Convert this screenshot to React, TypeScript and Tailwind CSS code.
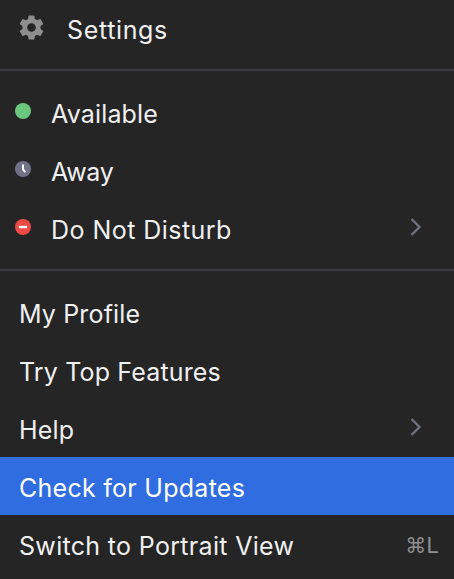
import React from "react";

function Chevron() {
  return (
    <svg width="12" height="20" viewBox="0 0 12 20" fill="none" stroke="#6f7080" strokeWidth="2.4" className="shrink-0">
      <path d="M1.5 2 L9.5 10 L1.5 18" />
    </svg>
  );
}

function Row({ label, icon, right, active, pad, shift, track }: { label: string; icon?: React.ReactNode; right?: React.ReactNode; active?: boolean; pad?: string; shift?: string; track?: string }) {
  return (
    <div className={`h-[58px] flex items-center ${active ? "bg-[#2f6de0]" : ""}`}>
      {icon}
      <span className={`text-[25px] leading-none ${track ?? "tracking-[0.15px]"} ${active ? "text-white" : "text-[#f0f0f0]"} ${pad ?? "ml-[19px]"} ${shift ?? "mt-1"}`}>{label}</span>
      {right && <div className="ml-auto flex items-center">{right}</div>}
    </div>
  );
}

function Gear() {
  return (
    <svg width="29" height="29" viewBox="0 0 24 24" className="ml-[16.5px] -mt-[4px] shrink-0" fill="#8e8e8e">
      <path fillRule="evenodd" d="M19.4 13c.04-.33.1-.66.1-1s-.06-.67-.1-1l2.1-1.65c.2-.15.25-.42.12-.65l-2-3.46a.5.5 0 0 0-.6-.22l-2.5 1a7.3 7.3 0 0 0-1.7-1l-.37-2.6A.5.5 0 0 0 13.95 2h-3.9a.5.5 0 0 0-.5.42l-.37 2.6c-.6.25-1.17.6-1.7 1l-2.5-1a.5.5 0 0 0-.6.22l-2 3.46c-.13.23-.07.5.12.65L4.6 11c-.04.33-.1.66-.1 1s.06.67.1 1l-2.1 1.65c-.2.15-.25.42-.12.65l2 3.46c.12.22.38.3.6.22l2.5-1c.53.4 1.1.75 1.7 1l.37 2.6c.04.24.25.42.5.42h3.9c.25 0 .46-.18.5-.42l.37-2.6c.6-.25 1.17-.6 1.7-1l2.5 1c.22.08.48 0 .6-.22l2-3.46a.5.5 0 0 0-.12-.65L19.4 13ZM12 15.6a3.6 3.6 0 1 1 0-7.2 3.6 3.6 0 0 1 0 7.2Z" />
    </svg>
  );
}

function Dot({ kind }: { kind: "green" | "away" | "dnd" }) {
  return (
    <svg width="16" height="16" viewBox="0 0 16 16" className="ml-[15px] -mt-[6px] shrink-0">
      <circle cx="8" cy="8" r="8" fill={kind === "green" ? "#6bc77d" : kind === "away" ? "#71718a" : "#ec4a45"} />
      {kind === "away" && <path d="M8 3.5 V8.5 L10.2 11.2" stroke="#fff" strokeWidth="2" fill="none" />}
      {kind === "dnd" && <rect x="3.8" y="6.7" width="8.4" height="2.6" rx="1" fill="#fff" />}
    </svg>
  );
}

export default function App() {
  return (
    <div className="w-[454px] h-[579px] overflow-hidden bg-[#252525] font-['Inter','Liberation_Sans',sans-serif]">
      <Row label="Settings" icon={<Gear />} pad="ml-[21.5px]" shift="mt-[2px]" track="tracking-[0.65px]" />
      <div className="h-0.5 bg-[#3e3e42] mt-[11px] mb-[14px]" />
      <Row label="Available" icon={<Dot kind="green" />} pad="ml-[20px]" shift="mt-0" />
      <Row label="Away" icon={<Dot kind="away" />} pad="ml-[20px]" shift="mt-0" track="tracking-[-0.35px]" />
      <Row label="Do Not Disturb" icon={<Dot kind="dnd" />} pad="ml-[20px]" shift="mt-0" track="tracking-[0.45px]" right={<div className="mr-[32px] -mt-[6px] flex"><Chevron /></div>} />
      <div className="h-0.5 bg-[#3e3e42] mt-[10px] mb-[12px]" />
      <Row label="My Profile" />
      <Row label="Try Top Features" />
      <Row label="Help" right={<div className="mr-[32px] -mt-[2px] flex"><Chevron /></div>} />
      <Row label="Check for Updates" active track="tracking-[0.27px]" />
      <Row label="Switch to Portrait View" track="tracking-[0.32px]" right={<span className="mr-[16px] mt-1 text-[21px] leading-none text-[#8f8f8f] font-['DejaVu_Sans','Inter',sans-serif]">⌘L</span>} />
    </div>
  );
}
